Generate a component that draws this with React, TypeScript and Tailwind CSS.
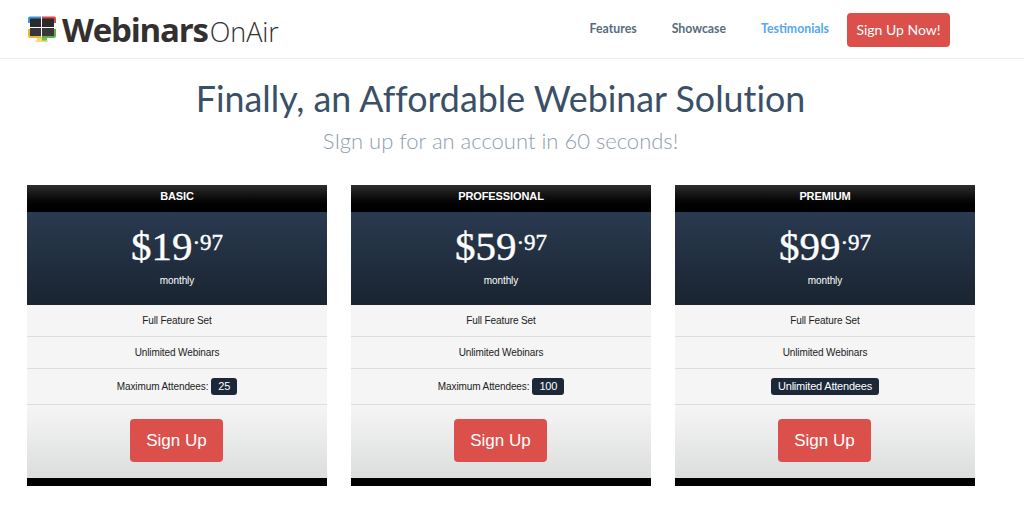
const plans = [
  { name: "BASIC", price: "$19", limit: "25" },
  { name: "PROFESSIONAL", price: "$59", limit: "100" },
  { name: "PREMIUM", price: "$99", limit: null },
];

function Logo() {
  return (
    <svg width="30" height="30" viewBox="0 0 30 30" className="mt-[1px] shrink-0">
      <rect x="10" y="22" width="10" height="4" fill="#f5d76e" />
      <rect x="15" y="22" width="5" height="4" fill="#6fbf4a" />
      <rect x="8" y="25.5" width="13" height="1.5" fill="#e6e08a" />
      <path d="M1 8V3.5A2 2 0 0 1 3 1.500H14V8Z" fill="#3b97dc" />
      <path d="M15 1.500H27A2 2 0 0 1 29 3.500V8H15Z" fill="#d9493f" />
      <path d="M1 14V21A2 2 0 0 0 3 23H14V14Z" fill="#f2b632" />
      <path d="M15 14V23H27A2 2 0 0 0 29 21V14Z" fill="#5db146" />
      <rect x="3" y="3.500" width="11" height="8.500" fill="#2b2b2d" />
      <rect x="15" y="3.500" width="12" height="8.500" fill="#2b2b2d" />
      <rect x="3" y="13" width="11" height="8" fill="#38383a" />
      <rect x="15" y="13" width="12" height="8" fill="#38383a" />
    </svg>
  );
}

function Card({ plan }: { plan: (typeof plans)[number] }) {
  return (
    <div className="flex flex-col font-['Liberation_Sans',sans-serif]">
      <div className="flex h-[27px] items-center justify-center bg-gradient-to-b from-[#2e2e30] to-black pb-[4px] text-[11px] font-bold tracking-[-0.1px] text-white">
        {plan.name}
      </div>
      <div className="flex h-[93px] flex-col items-center bg-gradient-to-b from-[#2a3a50] to-[#1a2431] text-white">
        <div className="mt-[10px] flex h-[48px] items-start font-['Liberation_Serif',serif] [-webkit-text-stroke:0.4px_white]">
          <span className="text-[41px] leading-[48px]">{plan.price}</span>
          <span className="mt-[6px] text-[23px] leading-[30px]">·97</span>
        </div>
        <div className="mt-[4px] text-[10px] leading-[14px] tracking-[-0.1px]">monthly</div>
      </div>
      <div className="flex h-[32px] items-center justify-center border-b border-[#dddddd] bg-[#f5f5f5] text-[10px] tracking-[-0.1px] text-[#222222]">
        Full Feature Set
      </div>
      <div className="flex h-[32px] items-center justify-center border-b border-[#dddddd] bg-[#f5f5f5] text-[10px] tracking-[-0.1px] text-[#222222]">
        Unlimited Webinars
      </div>
      <div className="flex h-[36px] items-center justify-center gap-[3px] border-b border-[#dddddd] bg-[#f5f5f5] text-[10px] tracking-[-0.1px] text-[#222222]">
        {plan.limit ? (
          <>
            <span>Maximum Attendees:</span>
            <span className="rounded-[3px] bg-[#1c2838] px-[7px] py-[1px] text-[11px] leading-[15px] tracking-[-0.2px] text-white">
              {plan.limit}
            </span>
          </>
        ) : (
          <span className="rounded-[3px] bg-[#1c2838] px-[7px] py-[1px] text-[11px] leading-[15px] tracking-[-0.2px] text-white">
            Unlimited Attendees
          </span>
        )}
      </div>
      <div className="flex h-[73px] items-start justify-center bg-gradient-to-b from-[#f5f5f5] to-[#dcdedd] pt-[14px] pr-[1px]">
        <button className="h-[43px] w-[93px] rounded-[4px] bg-[#dc504c] text-[17px] text-white">
          Sign Up
        </button>
      </div>
      <div className="h-[8px] bg-black" />
    </div>
  );
}

export default function App() {
  return (
    <div className="h-[514px] w-[1024px] overflow-hidden bg-white font-['Lato',sans-serif]">
      <header className="flex h-[59px] items-center border-b border-[#eeeeee] pr-[74px] pl-[27px]">
        <Logo />
        <div className="ml-[5px] flex items-baseline font-['Open_Sans',sans-serif] leading-none text-[#33302f]">
          <span className="text-[33px] font-bold tracking-[-1.2px]">Webinars</span>
          <span className="ml-[2px] text-[27px] font-light tracking-[-0.1px]">OnAir</span>
        </div>
        <nav className="ml-auto flex items-center text-[12.3px] font-bold">
          <span className="text-[#5a6b7d]">Features</span>
          <span className="ml-[35px] text-[#5a6b7d]">Showcase</span>
          <span className="ml-[35px] text-[#55a7f0]">Testimonials</span>
          <span className="mt-[1px] ml-[18px] flex h-[34px] w-[103px] items-center justify-center rounded-[4px] bg-[#dc504c] text-[14px] font-normal text-white">
            Sign Up Now!
          </span>
        </nav>
      </header>
      <main className="flex flex-col items-center pr-[23px] [font-variant-ligatures:none]">
        <h1 className="mt-[17px] text-[35.8px] leading-[46px] font-normal text-[#3a5068]">
          Finally, an Affordable Webinar Solution
        </h1>
        <p className="mt-[4px] text-[22px] leading-[30px] font-light text-[#8f9eac]">
          SIgn up for an account in 60 seconds!
        </p>
      </main>
      <section className="mt-[29px] ml-[27px] grid w-[948px] grid-cols-3 gap-[24px]">
        {plans.map((p) => (
          <Card key={p.name} plan={p} />
        ))}
      </section>
    </div>
  );
}
